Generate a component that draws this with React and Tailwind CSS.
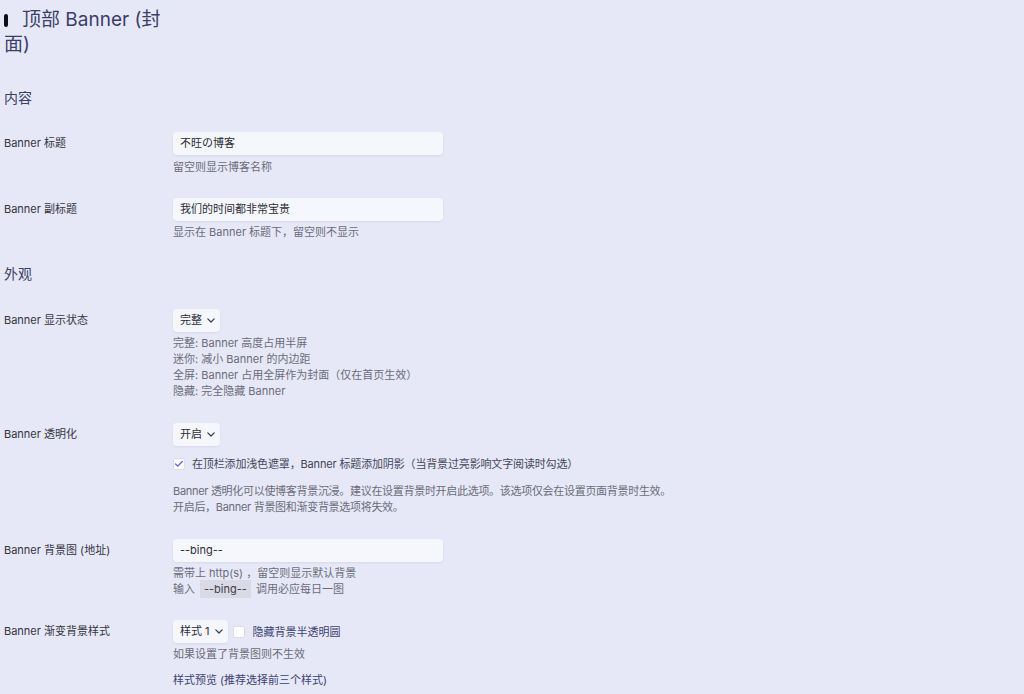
import { Check } from "lucide-react";

const FONT = { fontFamily: 'Inter, "Noto Sans CJK SC", sans-serif' };

function Label({ children }) {
    return <div className="w-[169px] shrink-0 pt-[3px] h-[19px] text-[11px] leading-4 text-[#34353f]">{children}</div>;
}

function TextInput({ value }) {
    return (
        <div className="w-[270px] h-[23px] flex items-center px-[7px] rounded-[4px] bg-[#f6f7fd] shadow-[0_1px_2px_rgba(40,40,90,0.08)] text-[11px] text-[#2c2d35]">
            {value}
        </div>
    );
}

function Select({ value }) {
    return (
        <div className="w-fit h-[23px] flex items-center gap-[5px] pl-[7px] pr-[5px] rounded-[4px] bg-[#f6f7fd] shadow-[0_1px_2px_rgba(40,40,90,0.08)] text-[11px] text-[#2c2d35]">
            {value}
            <svg width="8" height="5" viewBox="0 0 8 5" fill="none" stroke="#3a3b48" strokeWidth="1.2" strokeLinecap="round" strokeLinejoin="round">
                <path d="M0.8 0.8 L4 4 L7.2 0.8" />
            </svg>
        </div>
    );
}

function Box({ checked }) {
    return (
        <div className="w-[12px] h-[12px] shrink-0 rounded-[2px] bg-white border border-[#dcdde8] flex items-center justify-center">
            {checked && <Check size={10} strokeWidth={3} className="text-[#4e5fe0]" />}
        </div>
    );
}

function Line({ children, className = "" }) {
    return <div className={"h-4 flex items-center whitespace-nowrap " + className}>{children}</div>;
}

function Desc({ children, className = "" }) {
    return <div className={"text-[11px] leading-4 text-[#6b6c78] " + className}>{children}</div>;
}

function Section({ children }) {
    return <h3 className="h-5 text-[14px] leading-5 font-normal text-[#3b3e66]">{children}</h3>;
}

export default function App() {
    return (
        <div style={FONT} className="w-full min-h-[694px] bg-[#e6e8f8] pl-[4px] pt-[7px] overflow-hidden">
            <h2 className="w-[166px] h-[50px] text-[19px] leading-[25px] font-normal text-[#3b3e66]">
                <span className="inline-block w-[4px] h-[13px] rounded-full bg-[#0e0e16] mr-[14px] align-[-1px]" />
                顶部 Banner (封面)
            </h2>

            <div className="mt-[31px]">
                <Section>内容</Section>
            </div>

            <div className="mt-[24px] flex">
                <Label>Banner 标题</Label>
                <div>
                    <TextInput value="不旺の博客" />
                    <Desc className="mt-[4px]">
                        <Line>留空则显示博客名称</Line>
                    </Desc>
                </div>
            </div>

            <div className="mt-[23px] flex">
                <Label>Banner 副标题</Label>
                <div>
                    <TextInput value="我们的时间都非常宝贵" />
                    <Desc className="mt-[3px]">
                        <Line>显示在 Banner 标题下，留空则不显示</Line>
                    </Desc>
                </div>
            </div>

            <div className="mt-[24px]">
                <Section>外观</Section>
            </div>

            <div className="mt-[25px] flex">
                <Label>Banner 显示状态</Label>
                <div>
                    <Select value="完整" />
                    <Desc className="mt-[3px]">
                        <Line>完整: Banner 高度占用半屏</Line>
                        <Line>迷你: 减小 Banner 的内边距</Line>
                        <Line>全屏: Banner 占用全屏作为封面（仅在首页生效）</Line>
                        <Line>隐藏: 完全隐藏 Banner</Line>
                    </Desc>
                </div>
            </div>

            <div className="mt-[24px] flex">
                <Label>Banner 透明化</Label>
                <div>
                    <Select value="开启" />
                    <div className="mt-[10px] h-4 flex items-center gap-[7px] text-[11px] leading-4 tracking-[-0.15px] text-[#44465a]">
                        <Box checked />
                        在顶栏添加浅色遮罩，Banner 标题添加阴影（当背景过亮影响文字阅读时勾选）
                    </div>
                    <Desc className="mt-[11px] tracking-[-0.3px]">
                        <Line>Banner 透明化可以使博客背景沉浸。建议在设置背景时开启此选项。该选项仅会在设置页面背景时生效。</Line>
                        <Line>开启后，Banner 背景图和渐变背景选项将失效。</Line>
                    </Desc>
                </div>
            </div>

            <div className="mt-[24px] flex">
                <Label>Banner 背景图 (地址)</Label>
                <div>
                    <TextInput value="--bing--" />
                    <Desc className="mt-[3px]">
                        <Line>需带上 http(s) ，留空则显示默认背景</Line>
                        <Line>
                            输入
                            <code className="mx-[5px] px-[4px] h-[18px] flex items-center bg-[#d9dae6] text-[#3f404c] font-[inherit]">--bing--</code>
                            调用必应每日一图
                        </Line>
                    </Desc>
                </div>
            </div>

            <div className="mt-[23px] flex">
                <Label>Banner 渐变背景样式</Label>
                <div>
                    <div className="flex items-center gap-[5px]">
                        <Select value="样式 1" />
                        <Box />
                        <span className="ml-[3px] text-[11px] leading-4 text-[#3d4270]">隐藏背景半透明圆</span>
                    </div>
                    <Desc className="mt-[3px]">
                        <Line>如果设置了背景图则不生效</Line>
                    </Desc>
                    <Line className="mt-[10px] text-[11px] text-[#3d4270]">样式预览 (推荐选择前三个样式)</Line>
                </div>
            </div>
        </div>
    );
}
